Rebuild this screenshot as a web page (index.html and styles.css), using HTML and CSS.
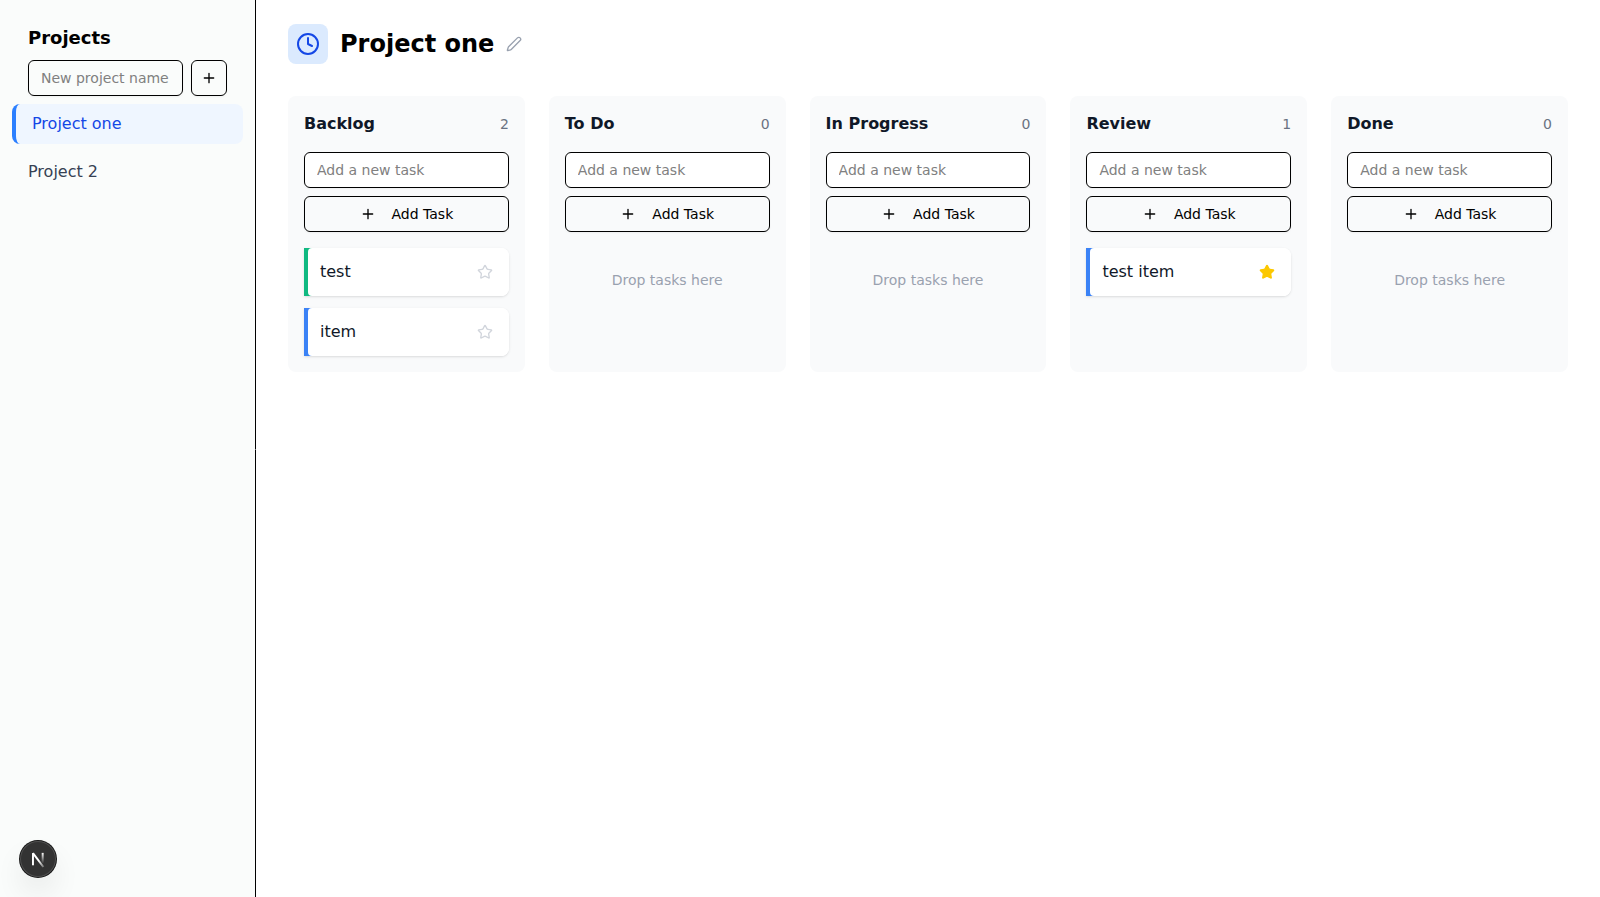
FILE: index.html
```html
<!DOCTYPE html>
<html lang="en">
<head>
<meta charset="utf-8">
<title>Project one</title>
<link rel="stylesheet" href="styles.css">
</head>
<body>
<svg class="sprite" aria-hidden="true">
  <symbol id="plus" viewBox="0 0 24 24"><path d="M5 12h14M12 5v14"/></symbol>
  <symbol id="clock" viewBox="0 0 24 24"><circle cx="12" cy="12" r="10"/><path d="M12 6v6l4 2"/></symbol>
  <symbol id="pencil" viewBox="0 0 24 24"><path d="M21.174 6.812a1 1 0 0 0-3.986-3.987L3.842 16.174a2 2 0 0 0-.5.83l-1.321 4.352a.5.5 0 0 0 .623.622l4.353-1.32a2 2 0 0 0 .83-.497z"/></symbol>
  <symbol id="star" viewBox="0 0 24 24"><path d="M11.525 2.295a.53.53 0 0 1 .95 0l2.31 4.679a2.123 2.123 0 0 0 1.595 1.16l5.166.756a.53.53 0 0 1 .294.904l-3.736 3.638a2.123 2.123 0 0 0-.611 1.878l.882 5.14a.53.53 0 0 1-.771.56l-4.618-2.428a2.122 2.122 0 0 0-1.973 0L6.396 21.01a.53.53 0 0 1-.77-.56l.881-5.139a2.122 2.122 0 0 0-.611-1.879L2.16 9.795a.53.53 0 0 1 .294-.906l5.165-.755a2.122 2.122 0 0 0 1.597-1.16z"/></symbol>
</svg>
<div class="app">
  <aside class="sidebar">
    <div class="sidebar-head">
      <h2 class="sidebar-title">Projects</h2>
      <form class="new-project">
        <input class="field" type="text" placeholder="New project name" aria-label="New project name">
        <button class="btn btn-square" type="button" aria-label="Add project"><svg class="icon"><use href="#plus"/></svg></button>
      </form>
    </div>
    <nav class="project-list">
      <a class="project active" href="#one">Project one</a>
      <a class="project" href="#two">Project 2</a>
    </nav>
  </aside>
  <main class="main">
    <header class="header">
      <span class="badge"><svg class="icon icon-lg"><use href="#clock"/></svg></span>
      <h1 class="title">Project one</h1>
      <button class="icon-btn edit" type="button" aria-label="Rename project"><svg class="icon"><use href="#pencil"/></svg></button>
    </header>
    <div class="board">
      <section class="column">
        <div class="column-head"><h3 class="column-title">Backlog</h3><span class="count">2</span></div>
        <form class="new-task">
          <input class="field field-white" type="text" placeholder="Add a new task" aria-label="New Backlog task">
          <button class="btn" type="button"><svg class="icon"><use href="#plus"/></svg>Add Task</button>
        </form>
        <div class="tasks">
          <div class="task green"><div class="task-body"><span>test</span><button class="icon-btn star" type="button" aria-label="Star test"><svg class="icon"><use href="#star"/></svg></button></div></div>
          <div class="task blue"><div class="task-body"><span>item</span><button class="icon-btn star" type="button" aria-label="Star item"><svg class="icon"><use href="#star"/></svg></button></div></div>
        </div>
      </section>
      <section class="column">
        <div class="column-head"><h3 class="column-title">To Do</h3><span class="count">0</span></div>
        <form class="new-task">
          <input class="field field-white" type="text" placeholder="Add a new task" aria-label="New To Do task">
          <button class="btn" type="button"><svg class="icon"><use href="#plus"/></svg>Add Task</button>
        </form>
        <p class="empty">Drop tasks here</p>
      </section>
      <section class="column">
        <div class="column-head"><h3 class="column-title">In Progress</h3><span class="count">0</span></div>
        <form class="new-task">
          <input class="field field-white" type="text" placeholder="Add a new task" aria-label="New In Progress task">
          <button class="btn" type="button"><svg class="icon"><use href="#plus"/></svg>Add Task</button>
        </form>
        <p class="empty">Drop tasks here</p>
      </section>
      <section class="column">
        <div class="column-head"><h3 class="column-title">Review</h3><span class="count">1</span></div>
        <form class="new-task">
          <input class="field field-white" type="text" placeholder="Add a new task" aria-label="New Review task">
          <button class="btn" type="button"><svg class="icon"><use href="#plus"/></svg>Add Task</button>
        </form>
        <div class="tasks">
          <div class="task blue"><div class="task-body"><span>test item</span><button class="icon-btn star starred" type="button" aria-label="Unstar test item"><svg class="icon"><use href="#star"/></svg></button></div></div>
        </div>
      </section>
      <section class="column">
        <div class="column-head"><h3 class="column-title">Done</h3><span class="count">0</span></div>
        <form class="new-task">
          <input class="field field-white" type="text" placeholder="Add a new task" aria-label="New Done task">
          <button class="btn" type="button"><svg class="icon"><use href="#plus"/></svg>Add Task</button>
        </form>
        <p class="empty">Drop tasks here</p>
      </section>
    </div>
  </main>
</div>
<button class="dev-badge" type="button" aria-label="Open dev tools">
  <svg class="dev-mark" viewBox="0 0 40 40" fill="none">
    <defs>
      <linearGradient id="fade-a" x1="21" y1="22" x2="27" y2="30" gradientUnits="userSpaceOnUse"><stop stop-color="#fff"/><stop offset="1" stop-color="#fff" stop-opacity="0.2"/></linearGradient>
      <linearGradient id="fade-b" x1="25" y1="13" x2="25" y2="25" gradientUnits="userSpaceOnUse"><stop stop-color="#fff"/><stop offset="1" stop-color="#fff" stop-opacity="0"/></linearGradient>
    </defs>
    <path d="M14.4 27V13.4" stroke="#fff" stroke-width="2.2"/>
    <path d="M14.4 13.4L26 28.9" stroke="url(#fade-a)" stroke-width="2.2"/>
    <path d="M25.2 13.2v12.3" stroke="url(#fade-b)" stroke-width="2.2"/>
  </svg>
</button>
</body>
</html>
```

FILE: styles.css
```css
* { box-sizing: border-box; }

body {
  margin: 0;
  font-family: "DejaVu Sans", sans-serif;
  font-size: 16px;
  line-height: 24px;
  color: #000;
  background: #fff;
}

h1, h2, h3, p { margin: 0; }
input, button { font: inherit; color: inherit; }
button { cursor: pointer; }

.sprite { position: absolute; width: 0; height: 0; }

.app { display: flex; min-height: 100vh; }

.sidebar {
  position: relative;
  flex: none;
  width: 256px;
  padding: 24px 12px;
  background: #fafcfb;
  border-right: 1px solid #000;
}

.sidebar::after {
  content: "";
  position: absolute;
  top: 50%;
  right: -1px;
  width: 1px;
  height: 1px;
  background: #777;
}

.sidebar-head { padding: 0 16px; }

.sidebar-title {
  margin-bottom: 8px;
  font-size: 18px;
  line-height: 28px;
  font-weight: 700;
}

.new-project { display: flex; gap: 8px; margin-bottom: 8px; }

.field {
  width: 100%;
  min-width: 0;
  height: 36px;
  padding: 4px 12px;
  border: 1px solid #000;
  border-radius: 6px;
  background: transparent;
  font-size: 14px;
  line-height: 20px;
  box-shadow: 0 1px 2px rgba(0, 0, 0, 0.05);
}
.field::placeholder { color: #808080; opacity: 1; }
.field-white { background: #fff; }

.btn {
  display: flex;
  align-items: center;
  justify-content: center;
  gap: 16px;
  width: 100%;
  height: 36px;
  padding: 0;
  border: 1px solid #000;
  border-radius: 6px;
  background: transparent;
  font-size: 14px;
  line-height: 20px;
  box-shadow: 0 1px 2px rgba(0, 0, 0, 0.05);
}
.btn-square { flex: none; width: 36px; }

.icon {
  flex: none;
  width: 16px;
  height: 16px;
  fill: none;
  stroke: currentColor;
  stroke-width: 2;
  stroke-linecap: round;
  stroke-linejoin: round;
}
.icon-lg { width: 24px; height: 24px; }

.project-list { display: flex; flex-direction: column; gap: 8px; }

.project {
  padding: 8px 16px;
  border-radius: 8px;
  color: #364153;
  text-decoration: none;
}
.project.active {
  border-left: 4px solid #2b7fff;
  background: #eff6ff;
  color: #1447e6;
}

.main { flex: 1; min-width: 0; padding: 24px 32px; }

.header {
  display: flex;
  align-items: center;
  gap: 12px;
  margin-bottom: 32px;
}

.badge {
  display: flex;
  padding: 8px;
  border-radius: 8px;
  background: #dbeafe;
  color: #1447e6;
}

.title { font-size: 24px; line-height: 32px; font-weight: 700; }

.icon-btn { display: flex; padding: 0; border: 0; background: none; }
.edit { color: #99a1af; }

.board {
  display: grid;
  grid-template-columns: repeat(5, minmax(0, 1fr));
  gap: 24px;
}

.column { padding: 16px; border-radius: 8px; background: #f9fafb; }

.column-head {
  display: flex;
  align-items: center;
  justify-content: space-between;
  margin-bottom: 16px;
}
.column-title { font-size: 16px; font-weight: 700; color: #101828; }
.count { font-size: 14px; line-height: 20px; color: #6a7282; }

.new-task { display: flex; flex-direction: column; gap: 8px; margin-bottom: 16px; }

.tasks { display: flex; flex-direction: column; gap: 12px; }

.task {
  border-left: 4px solid;
  border-radius: 0 8px 8px 0;
  box-shadow: 0 1px 3px rgba(0, 0, 0, 0.1), 0 1px 2px -1px rgba(0, 0, 0, 0.1);
}
.green { border-color: #10b981; background: linear-gradient(90deg, #10b981 8px, #fff 8px); }
.blue { border-color: #3b82f6; background: linear-gradient(90deg, #3b82f6 8px, #fff 8px); }

.task-body {
  display: flex;
  align-items: center;
  justify-content: space-between;
  padding: 12px 16px 12px 12px;
  border-radius: 4px 8px 8px 4px;
  background: #fff;
  color: #101828;
}

.star { color: #d1d5dc; }
.starred { color: #fcc800; }
.starred .icon { fill: currentColor; }

.empty {
  padding: 22px 0;
  text-align: center;
  font-size: 14px;
  line-height: 20px;
  color: #99a1af;
}

.dev-badge {
  position: fixed;
  left: 20px;
  bottom: 20px;
  width: 36px;
  height: 36px;
  padding: 0;
  border: 0;
  border-radius: 50%;
  background: #333;
  box-shadow: 0 0 0 1px #171717, inset 0 0 0 1px rgba(255, 255, 255, 0.14), 0 16px 32px -8px rgba(0, 0, 0, 0.24);
}
.dev-mark { display: block; width: 36px; height: 36px; }
```
